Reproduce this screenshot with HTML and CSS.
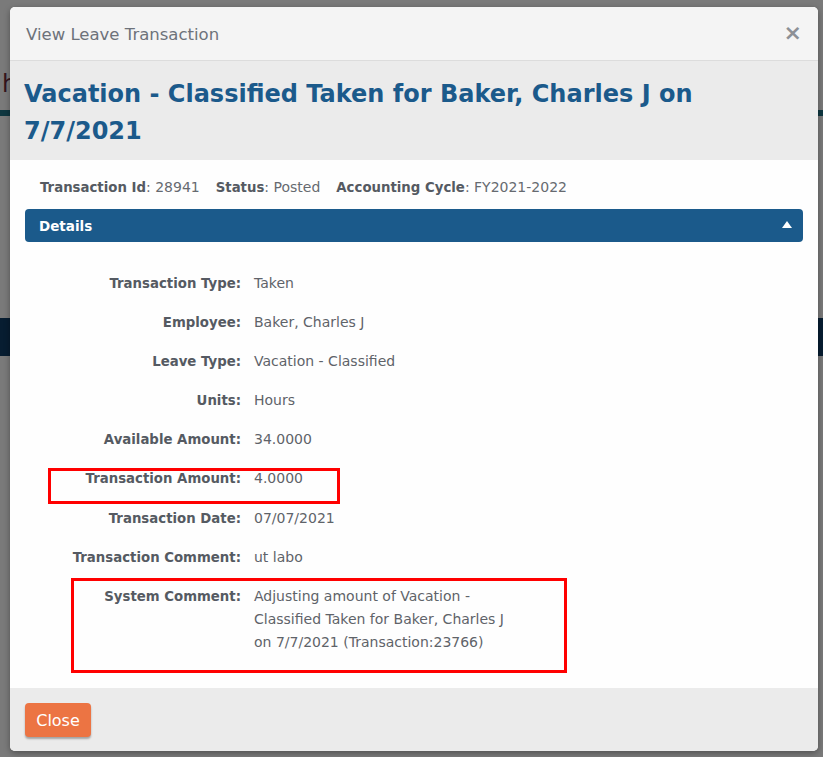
FILE: index.html
```html
<!DOCTYPE html>
<html lang="en">
<head>
<meta charset="utf-8">
<title>View Leave Transaction</title>
<link rel="stylesheet" href="styles.css">
</head>
<body>
<div class="page">
  <div class="page-top"></div>
  <div class="page-heading">h</div>
  <div class="page-rule"></div>
  <div class="page-gap"></div>
  <div class="page-nav"></div>
  <div class="page-rest"></div>
</div>
<div class="backdrop"></div>

<div class="modal" role="dialog" aria-labelledby="modal-title">
  <div class="modal-header">
    <span class="modal-caption">View Leave Transaction</span>
    <button class="modal-x" type="button" aria-label="Close">&times;</button>
  </div>
  <div class="modal-title-bar">
    <h1 id="modal-title" class="modal-title">Vacation - Classified Taken for Baker, Charles J on 7/7/2021</h1>
  </div>
  <div class="modal-body">
    <div class="summary">
      <span><b>Transaction Id</b>: 28941</span>
      <span><b>Status</b>: Posted</span>
      <span><b>Accounting Cycle</b>: FY2021-2022</span>
    </div>
    <div class="panel-head">
      <span>Details</span>
      <span class="caret"></span>
    </div>
    <dl class="details">
      <dt>Transaction Type:</dt><dd>Taken</dd>
      <dt>Employee:</dt><dd>Baker, Charles J</dd>
      <dt>Leave Type:</dt><dd>Vacation - Classified</dd>
      <dt>Units:</dt><dd>Hours</dd>
      <dt>Available Amount:</dt><dd>34.0000</dd>
      <dt>Transaction Amount:</dt><dd>4.0000</dd>
      <dt>Transaction Date:</dt><dd>07/07/2021</dd>
      <dt>Transaction Comment:</dt><dd>ut labo</dd>
      <dt>System Comment:</dt><dd class="wrap">Adjusting amount of Vacation - Classified Taken for Baker, Charles J on 7/7/2021 (Transaction:23766)</dd>
    </dl>
  </div>
  <div class="modal-footer">
    <button class="btn-close" type="button">Close</button>
  </div>
  <div class="mark mark-amount"></div>
  <div class="mark mark-comment"></div>
</div>
</body>
</html>
```

FILE: styles.css
```css
* { box-sizing: border-box; }

html, body {
  margin: 0;
  padding: 0;
  width: 823px;
  height: 757px;
  overflow: hidden;
}

body {
  position: relative;
  font-family: "DejaVu Sans", "Liberation Sans", sans-serif;
  background: #ffffff;
}

/* page underneath the dialog */
.page {
  display: flex;
  flex-direction: column;
  height: 757px;
  background: #f4f4f4;
}
.page-top { height: 62px; }
.page-heading {
  height: 48px;
  padding-left: 2px;
  font-size: 24px;
  line-height: 44px;
  color: #6a2b3a;
}
.page-rule { height: 6px; background: #1e6f80; }
.page-gap { height: 202px; }
.page-nav { height: 38px; background: #0f3a63; }
.page-rest { flex: 1; }

.backdrop {
  position: absolute;
  inset: 0;
  background: rgba(0, 0, 0, 0.5);
}

/* dialog */
.modal {
  position: absolute;
  left: 10px;
  top: 7px;
  width: 808px;
  height: 744px;
  display: flex;
  flex-direction: column;
  background: #ffffff;
  border-radius: 5px;
  overflow: hidden;
  box-shadow: 0 2px 6px rgba(0, 0, 0, 0.35);
}

.modal-header {
  height: 54px;
  flex: none;
  display: flex;
  align-items: center;
  justify-content: space-between;
  padding: 0 16px 0 16px;
  background: #f4f4f4;
  border-bottom: 1px solid #dcdcdc;
}
.modal-caption {
  font-size: 16.5px;
  color: #6d727a;
  padding-top: 1px;
}
.modal-x {
  border: 0;
  background: none;
  padding: 0;
  font-family: "DejaVu Sans", sans-serif;
  font-size: 22px;
  line-height: 1;
  font-weight: bold;
  color: #8d9096;
  margin-top: -2px;
}

.modal-title-bar {
  flex: none;
  height: 99px;
  padding: 15px 14px 0 14px;
  background: #ebebeb;
}
.modal-title {
  margin: 0;
  font-size: 24px;
  line-height: 37px;
  font-weight: 700;
  color: #1b5a8b;
}

.modal-body {
  flex: 1;
  position: relative;
  padding: 0 15px;
  background: #fefefe;
}

.summary {
  display: flex;
  gap: 16px;
  padding: 17px 0 0 15px;
  height: 49px;
  font-size: 14px;
  line-height: 20px;
  color: #666a70;
}
.summary b {
  font-size: 13.3px;
  font-weight: 700;
  color: #555a62;
}

.panel-head {
  display: flex;
  align-items: center;
  justify-content: space-between;
  height: 33px;
  padding: 0 11px 0 14px;
  background: #1b5a8b;
  border-radius: 4px;
  color: #ffffff;
  font-size: 13.5px;
  font-weight: 700;
}
.caret {
  width: 0;
  height: 0;
  border-left: 5px solid transparent;
  border-right: 5px solid transparent;
  border-bottom: 7px solid #ffffff;
  margin-bottom: 2px;
}

.details {
  display: grid;
  grid-template-columns: 216px 262px;
  column-gap: 13px;
  row-gap: 16.1px;
  margin: 30px 0 0 0;
  font-size: 14px;
  line-height: 23px;
}
.details dt {
  text-align: right;
  font-size: 13.3px;
  font-weight: 700;
  color: #555a62;
}
.details dd {
  margin: 0;
  color: #5f6369;
}

.modal-footer {
  flex: none;
  height: 63px;
  padding: 15px;
  background: #ebebeb;
}
.btn-close {
  height: 34px;
  width: 66px;
  padding: 0;
  border: 0;
  border-radius: 4px;
  background: #ec7443;
  color: #ffffff;
  font-family: "DejaVu Sans", "Liberation Sans", sans-serif;
  font-size: 16px;
  box-shadow: 0 2px 2px rgba(0, 0, 0, 0.3);
}

/* highlight frames */
.mark {
  position: absolute;
  border: 3px solid #ff0000;
}
.mark-amount { left: 38px; top: 461px; width: 292px; height: 36px; }
.mark-comment { left: 61px; top: 571px; width: 496px; height: 95px; }
```
